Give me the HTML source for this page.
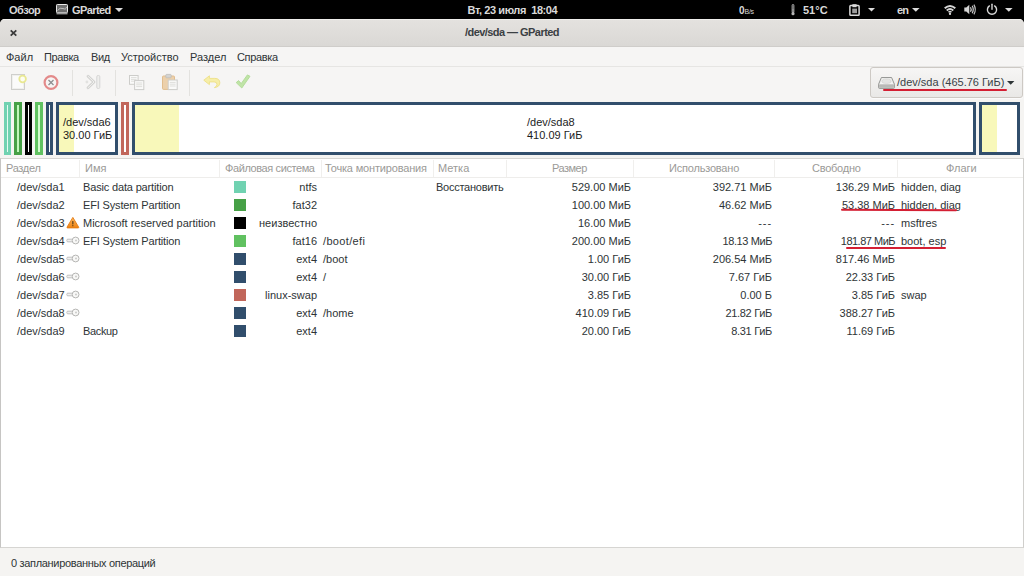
<!DOCTYPE html>
<html lang="ru">
<head>
<meta charset="utf-8">
<title>/dev/sda — GParted</title>
<style>
html,body{margin:0;padding:0;}
body{width:1024px;height:576px;overflow:hidden;position:relative;background:#000;
  font-family:"Liberation Sans","DejaVu Sans",sans-serif;font-size:11px;color:#2e3436;}
.abs{position:absolute;white-space:nowrap;}
svg{position:absolute;overflow:visible;}
/* ---------- GNOME top bar ---------- */
#topbar{position:absolute;left:0;top:0;width:1024px;height:20px;background:#000;color:#d9d9d9;font-weight:bold;font-size:11px;}
#topbar .t{position:absolute;top:1px;height:19px;line-height:19px;white-space:nowrap;}
/* ---------- window ---------- */
#win{position:absolute;left:0;top:19px;width:1024px;height:557px;background:#f5f4f2;border-radius:5px 5px 0 0;overflow:hidden;}
#titlebar{position:absolute;left:0;top:0;width:1024px;height:27px;background:linear-gradient(#e4e2df,#dad8d5);border-bottom:1px solid #cfcdca;box-shadow:inset 0 1px 0 #efeeec;}
#title{position:absolute;left:0;width:1024px;top:0;height:27px;line-height:27px;text-align:center;font-weight:bold;font-size:11px;letter-spacing:-0.55px;color:#3b4043;}
#menubar{position:absolute;left:0;top:28px;width:1024px;height:19px;background:#f6f5f4;border-bottom:1px solid #e6e5e3;}
#menubar span{position:absolute;top:0;height:20px;line-height:20px;font-size:11px;color:#2e3436;}
#toolbar{position:absolute;left:0;top:48px;width:1024px;height:33px;background:#f6f5f4;}
.sep{position:absolute;top:70px;width:1px;height:26px;background:#e3e2df;}
/* device combo */
#combo{position:absolute;left:870px;top:67px;width:151px;height:29px;border:1px solid #cdc9c4;border-radius:3px;background:linear-gradient(#f7f6f5,#e9e8e6);box-shadow:0 1px 0 rgba(255,255,255,.6);}
#combotxt{position:absolute;left:897px;top:75px;height:15px;line-height:15px;font-size:11px;color:#3a4347;white-space:nowrap;}
/* ---------- partition visual bar ---------- */
.p{position:absolute;top:102px;height:47px;border:3px solid #314e6c;background:#fff;box-sizing:content-box;}
.p .u{position:absolute;left:0;top:0;height:100%;background:#f8f8ba;}
.p .l{position:absolute;white-space:nowrap;font-size:11px;line-height:14px;color:#1c1c1c;}
/* ---------- tree ---------- */
#tree{position:absolute;left:0px;top:158px;width:1024px;height:390px;background:#fff;border:1px solid #d6d5d2;border-left-color:#c6c5c3;border-right-color:#d0cfcc;box-sizing:border-box;}
#hdr{position:absolute;left:1px;top:159px;width:1022px;height:18px;background:#fff;border-bottom:1px solid #eeedeb;}
.h{position:absolute;top:160px;height:17px;line-height:17px;font-size:11px;color:#9b9a97;white-space:nowrap;}
.hs{position:absolute;top:160px;width:1px;height:17px;background:#f0efed;}
.row{position:absolute;left:0;width:1024px;height:18px;}
.row .c{position:absolute;top:0;height:18px;line-height:18px;white-space:nowrap;font-size:11px;color:#2e3436;}
.row .sq{position:absolute;left:234px;top:3px;width:12px;height:12px;}
.ic{position:absolute;}
#status{position:absolute;left:11px;top:555px;height:16px;line-height:16px;font-size:11px;letter-spacing:-0.32px;color:#2e3436;white-space:nowrap;}
.ul{position:absolute;height:1.8px;background:#d41f33;border-radius:1px;}
</style>
</head>
<body>
<div id="topbar">
  <span class="t" style="left:9px;letter-spacing:-0.5px">Обзор</span>
  <span class="t" style="left:72px;letter-spacing:-0.6px">GParted</span>
  <span class="t" style="left:467.5px;letter-spacing:-0.42px">Вт, 23 июля&nbsp; 18:04</span>
  <span class="t" style="left:739px;font-size:10px;font-weight:bold;color:#d9d9d9">0<span style="font-size:7px;letter-spacing:-0.3px;font-weight:normal">B/s</span></span>
  <span class="t" style="left:803px">51°C</span>
  <span class="t" style="left:897px;letter-spacing:-0.8px">en</span>
</div>
<div id="win">
  <div id="titlebar">
    <div id="title">/dev/sda — GParted</div>
  </div>
  <div id="menubar">
    <span style="left:6px">Файл</span>
    <span style="left:44px;letter-spacing:-0.4px">Правка</span>
    <span style="left:91px;letter-spacing:-0.4px">Вид</span>
    <span style="left:121px">Устройство</span>
    <span style="left:190px">Раздел</span>
    <span style="left:237px;letter-spacing:-0.35px">Справка</span>
  </div>
  <div id="toolbar"></div>
</div>

<!-- toolbar separators -->
<div class="sep" style="left:72px"></div>
<div class="sep" style="left:115px"></div>
<div class="sep" style="left:189px"></div>


<div id="combo"></div>
<!-- ===== top bar icons ===== -->
<!-- app icon (hdd) -->
<svg style="left:56px;top:4px" width="12" height="11" viewBox="0 0 12 11">
  <rect x="0.5" y="0.5" width="11" height="8.2" rx="0.8" fill="#6e6e6e" stroke="#e8e8e8" stroke-width="1"/>
  <path d="M1.5 6.5 Q4 3 7 4.5 T10.5 3" fill="none" stroke="#bdbdbd" stroke-width="1"/>
  <rect x="0.5" y="8.6" width="11" height="1.8" fill="#9a9a9a"/>
</svg>
<svg style="left:115px;top:8px" width="8" height="4" viewBox="0 0 8 4"><path d="M0 0 H8 L4 4 Z" fill="#dcdcdc"/></svg>
<!-- thermometer -->
<svg style="left:790px;top:4px" width="6" height="12" viewBox="0 0 6 12">
  <rect x="2" y="0.4" width="2" height="8.4" rx="1" fill="#5a5a5a" stroke="#b5b5b5" stroke-width="0.7"/>
  <circle cx="3" cy="9.7" r="1.6" fill="#b5b5b5"/>
  <rect x="2.65" y="5" width="0.7" height="4" fill="#b5b5b5"/>
</svg>
<!-- clipboard -->
<svg style="left:849px;top:4px" width="11" height="12" viewBox="0 0 11 12">
  <rect x="0.9" y="1.6" width="9.2" height="9.6" rx="0.8" fill="none" stroke="#d9d9d9" stroke-width="1.5"/>
  <rect x="3.4" y="0.2" width="4.2" height="3" fill="#d9d9d9"/>
  <rect x="3.2" y="4.6" width="4.8" height="4.6" fill="#9c9c9c"/>
</svg>
<svg style="left:868px;top:8px" width="7" height="4" viewBox="0 0 7 4"><path d="M0 0 H7 L3.5 3.6 Z" fill="#dcdcdc"/></svg>
<svg style="left:912px;top:8px" width="8" height="4" viewBox="0 0 8 4"><path d="M0 0 H7.6 L3.8 3.8 Z" fill="#dcdcdc"/></svg>
<!-- wifi -->
<svg style="left:944px;top:5px" width="12" height="10" viewBox="0 0 12 10">
  <path d="M0.7 3.3 Q6 -1.5 11.3 3.3" fill="none" stroke="#d6d6d6" stroke-width="1.9"/>
  <path d="M2.7 5.5 Q6 2.5 9.3 5.5" fill="none" stroke="#d6d6d6" stroke-width="1.7"/>
  <path d="M4.5 7.3 Q6 6 7.5 7.3" fill="none" stroke="#d6d6d6" stroke-width="1.5"/>
  <circle cx="6" cy="8.9" r="1.15" fill="#d6d6d6"/>
</svg>
<!-- volume -->
<svg style="left:964px;top:4px" width="12" height="11" viewBox="0 0 12 11">
  <path d="M0.3 3.6 H2.3 L5.3 0.7 V10.3 L2.3 7.4 H0.3 Z" fill="#d6d6d6"/>
  <path d="M6.5 3.2 Q7.9 5.5 6.5 7.8" fill="none" stroke="#d6d6d6" stroke-width="1.2"/>
  <path d="M8.2 1.8 Q10.3 5.5 8.2 9.2" fill="none" stroke="#cfcfcf" stroke-width="1.2"/>
  <path d="M9.9 0.6 Q12.7 5.5 9.9 10.4" fill="none" stroke="#c2c2c2" stroke-width="1.2"/>
</svg>
<!-- power -->
<svg style="left:986px;top:4px" width="12" height="11" viewBox="0 0 12 11">
  <path d="M3.4 1.9 A4.6 4.6 0 1 0 8.6 1.9" fill="none" stroke="#d8d8d8" stroke-width="1.4" stroke-linecap="round"/>
  <path d="M6 0.3 V5.2" stroke="#d8d8d8" stroke-width="1.4" stroke-linecap="round"/>
</svg>
<svg style="left:1005px;top:8px" width="8" height="4" viewBox="0 0 8 4"><path d="M0 0 H7.6 L3.8 3.8 Z" fill="#dcdcdc"/></svg>

<!-- close button -->
<svg style="left:10px;top:30px" width="7" height="6" viewBox="0 0 7 6"><path d="M0.7 0.3 L6.3 5.7 M6.3 0.3 L0.7 5.7" stroke="#3a3a3a" stroke-width="1.75"/></svg>

<!-- ===== toolbar icons (insensitive / faded) ===== -->
<!-- new -->
<svg style="left:11px;top:74px" width="17" height="16" viewBox="0 0 17 16">
  <rect x="0.5" y="0.5" width="13" height="15" fill="#fbfbfa" stroke="#cfcfcc" stroke-width="1"/>
  <rect x="1.5" y="1.5" width="11" height="13" fill="none" stroke="#f0f0ee" stroke-width="1"/>
  <circle cx="11.6" cy="5" r="3.3" fill="#fdfdf0" stroke="#e9e892" stroke-width="1.8"/>
</svg>
<!-- delete -->
<svg style="left:43px;top:74px" width="16" height="17" viewBox="0 0 16 17">
  <circle cx="8" cy="8.5" r="6.4" fill="#f7f5f4" stroke="#e38a8a" stroke-width="2.2"/>
  <path d="M5.5 6 L10.5 11 M10.5 6 L5.5 11" stroke="#8e8e90" stroke-width="1.3"/>
</svg>
<!-- resize/move -->
<svg style="left:85px;top:75px" width="16" height="14" viewBox="0 0 16 14">
  <path d="M3 1.2 L9 7 L3 12.8" fill="none" stroke="#d3d3d1" stroke-width="2.8" stroke-linejoin="round" stroke-linecap="round"/>
  <path d="M3 1.2 L9 7 L3 12.8" fill="none" stroke="#f1f1ef" stroke-width="1" stroke-linejoin="round" stroke-linecap="round"/>
  <circle cx="1.9" cy="7" r="1.4" fill="#e2e2e0"/>
  <rect x="11.8" y="0.5" width="3" height="13" rx="1.2" fill="#efefed" stroke="#d3d3d1" stroke-width="0.9"/>
</svg>
<!-- copy -->
<svg style="left:129px;top:75px" width="16" height="15" viewBox="0 0 16 15">
  <rect x="0.5" y="0.5" width="8.6" height="8.8" fill="#fafaf9" stroke="#cdcdca" stroke-width="1"/>
  <path d="M2 2.6 H7.6 M2 4.4 H7.6 M2 6.2 H7.6" stroke="#dededb" stroke-width="1"/>
  <rect x="5.6" y="5.6" width="9.2" height="9" fill="#fafaf9" stroke="#cdcdca" stroke-width="1"/>
  <path d="M7.2 8 H13.2 M7.2 9.8 H13.2 M7.2 11.6 H13.2" stroke="#dededb" stroke-width="1"/>
</svg>
<!-- paste -->
<svg style="left:162px;top:74px" width="16" height="16" viewBox="0 0 16 16">
  <rect x="0.5" y="2" width="12" height="13.4" rx="1" fill="#ecd0ab" stroke="#e1bd8e" stroke-width="1"/>
  <rect x="3.8" y="0.4" width="5.4" height="3.4" rx="0.8" fill="#d4d4d2" stroke="#bdbdba" stroke-width="0.8"/>
  <rect x="6.2" y="6" width="9" height="9.6" fill="#fafaf9" stroke="#cdcdca" stroke-width="1"/>
  <path d="M7.8 8.4 H13.6 M7.8 10.2 H13.6 M7.8 12 H13.6" stroke="#dededb" stroke-width="1"/>
</svg>
<!-- undo -->
<svg style="left:203px;top:75px" width="18" height="14" viewBox="0 0 18 14">
  <path d="M6.4 0.8 L0.8 5.2 L6.4 9.6 V6.9 H11.2 Q14 6.9 14 9.4 Q14 11.6 11.4 12.6 Q16.8 12 16.8 7.8 Q16.8 3.4 11.8 3.4 H6.4 Z" fill="#f6eea8" stroke="#efe28c" stroke-width="1" stroke-linejoin="round"/>
</svg>
<!-- apply -->
<svg style="left:235px;top:74px" width="16" height="15" viewBox="0 0 16 15">
  <path d="M1.2 8.6 L3.6 6.6 L6.2 9.6 L12.4 0.9 L15 2.3 L6.8 14 Z" fill="#c0e4a7" stroke="#b0da95" stroke-width="0.9" stroke-linejoin="round"/>
</svg>

<!-- combo hdd icon + arrow -->
<svg style="left:878px;top:77px" width="17" height="12" viewBox="0 0 17 12">
  <path d="M3.4 0.5 H13.6 L16.4 7.2 V10.6 Q16.4 11.4 15.6 11.4 H1.4 Q0.6 11.4 0.6 10.6 V7.2 Z" fill="#dadad8" stroke="#8f908d" stroke-width="0.9" stroke-linejoin="round"/>
  <path d="M3.9 1.3 H13.1 L15.4 6.9 H1.6 Z" fill="#f3f3f2"/>
  <ellipse cx="8.5" cy="4.2" rx="4.6" ry="2.2" fill="#e4e4e2" stroke="#cfcfcd" stroke-width="0.6"/>
  <rect x="1.2" y="7.6" width="14.6" height="3.2" rx="0.6" fill="#b9bab7"/>
</svg>
<svg style="left:1007px;top:81px" width="8" height="4" viewBox="0 0 8 4"><path d="M0 0 H7.4 L3.7 3.8 Z" fill="#2e3436"/></svg>

<!-- device combo -->
<span id="combotxt">/dev/sda (465.76 ГиБ)</span>
<div class="ul" style="left:883px;top:89px;width:124px"></div>

<!-- partition bars -->
<div class="p" style="left:4px;width:1px;border-color:#70d2b1;background:#e6fbf2"></div>
<div class="p" style="left:14px;width:2px;border-color:#46a046;background:#c0f6ba"></div>
<div class="p" style="left:25px;width:1px;border-color:#000"></div>
<div class="p" style="left:35px;width:2px;border-color:#60c160;background:#d3fbce"></div>
<div class="p" style="left:46px;width:1px;border-color:#314e6c"></div>
<div class="p" style="left:56px;width:56px"><div class="u" style="width:15px"></div>
  <span class="l" style="left:4px;top:10px">/dev/sda6</span><span class="l" style="left:4px;top:23px">30.00 ГиБ</span></div>
<div class="p" style="left:121px;width:2px;border-color:#c1665a"></div>
<div class="p" style="left:132px;width:838px"><div class="u" style="width:44px"></div>
  <span class="l" style="left:392px;top:10px">/dev/sda8</span><span class="l" style="left:392px;top:23px">410.09 ГиБ</span></div>
<div class="p" style="left:979px;width:35px"><div class="u" style="width:15px"></div></div>

<!-- tree -->
<div id="tree"></div>
<div id="hdr"></div>
<span class="h" style="left:6px;letter-spacing:-0.3px">Раздел</span>
<span class="h" style="left:85px">Имя</span>
<span class="h" style="left:225px;letter-spacing:-0.4px">Файловая система</span>
<span class="h" style="left:325px;letter-spacing:-0.17px">Точка монтирования</span>
<span class="h" style="left:438px">Метка</span>
<span class="h" style="left:552px;letter-spacing:-0.5px">Размер</span>
<span class="h" style="left:669px;letter-spacing:-0.2px">Использовано</span>
<span class="h" style="left:812px;letter-spacing:-0.25px">Свободно</span>
<span class="h" style="left:946px">Флаги</span>
<div class="hs" style="left:79px"></div>
<div class="hs" style="left:219px"></div>
<div class="hs" style="left:321px"></div>
<div class="hs" style="left:433px"></div>
<div class="hs" style="left:506px"></div>
<div class="hs" style="left:633px"></div>
<div class="hs" style="left:774px"></div>
<div class="hs" style="left:897px"></div>

<div class="row" style="top:178px">
<span class="c" style="left:17px">/dev/sda1</span>
<span class="c" style="left:83px;letter-spacing:-0.16px">Basic data partition</span>
<span class="sq" style="background:#70d2b1"></span>
<span class="c r" style="right:707px">ntfs</span>
<span class="c" style="left:436px;letter-spacing:-0.25px">Восстановить</span>
<span class="c r" style="right:393px">529.00 МиБ</span>
<span class="c r" style="right:252px">392.71 МиБ</span>
<span class="c r" style="right:129px">136.29 МиБ</span>
<span class="c" style="left:901px">hidden, diag</span>
</div>
<div class="row" style="top:196px">
<span class="c" style="left:17px">/dev/sda2</span>
<span class="c" style="left:83px;letter-spacing:-0.15px">EFI System Partition</span>
<span class="sq" style="background:#46a046"></span>
<span class="c r" style="right:707px">fat32</span>
<span class="c r" style="right:393px">100.00 МиБ</span>
<span class="c r" style="right:252px">46.62 МиБ</span>
<span class="c r" style="right:129px">53.38 МиБ</span>
<span class="c" style="left:901px">hidden, diag</span>
</div>
<div class="row" style="top:214px">
<span class="c" style="left:17px">/dev/sda3</span>
<span class="c" style="left:83px">Microsoft reserved partition</span>
<span class="sq" style="background:#000000"></span>
<span class="c r" style="right:707px">неизвестно</span>
<span class="c r" style="right:393px">16.00 МиБ</span>
<span class="c r" style="right:252px;letter-spacing:0.9px">---</span>
<span class="c r" style="right:129px;letter-spacing:0.9px">---</span>
<span class="c" style="left:901px">msftres</span>
</div>
<svg class="ic" style="left:66px;top:217px" width="14" height="12" viewBox="0 0 14 12"><defs><linearGradient id="wg" x1="0" y1="0" x2="0" y2="1"><stop offset="0" stop-color="#fbb860"/><stop offset="1" stop-color="#ef8210"/></linearGradient></defs><path d="M6.85 0.4 L12.7 10.2 Q12.95 10.9 12.2 10.9 L1.5 10.9 Q0.75 10.9 1 10.2 Z" fill="url(#wg)" stroke="#e47c12" stroke-width="0.9" stroke-linejoin="round"/><rect x="6.3" y="3.9" width="1.1" height="3.5" rx="0.4" fill="#4a3418"/><rect x="6.3" y="8.1" width="1.1" height="1.2" rx="0.4" fill="#4a3418"/></svg>
<div class="row" style="top:232px">
<span class="c" style="left:17px">/dev/sda4</span>
<span class="c" style="left:83px;letter-spacing:-0.15px">EFI System Partition</span>
<span class="sq" style="background:#60c160"></span>
<span class="c r" style="right:707px">fat16</span>
<span class="c" style="left:323px;letter-spacing:0.35px">/boot/efi</span>
<span class="c r" style="right:393px">200.00 МиБ</span>
<span class="c r" style="right:252px;letter-spacing:-0.4px">18.13 МиБ</span>
<span class="c r" style="right:129px;letter-spacing:-0.5px">181.87 МиБ</span>
<span class="c" style="left:901px">boot, esp</span>
</div>
<svg class="ic" style="left:66px;top:236px" width="14" height="9" viewBox="0 0 14 9"><rect x="0.8" y="3.2" width="6.4" height="2.6" rx="1.1" fill="#f1f1f0" stroke="#bababa" stroke-width="0.9"/><circle cx="9.6" cy="4.5" r="3.4" fill="#f8f8f7" stroke="#b6b6b4" stroke-width="1"/><circle cx="10" cy="4.5" r="0.9" fill="#c6c6c4"/></svg>
<div class="row" style="top:250px">
<span class="c" style="left:17px">/dev/sda5</span>
<span class="sq" style="background:#314e6c"></span>
<span class="c r" style="right:707px">ext4</span>
<span class="c" style="left:323px">/boot</span>
<span class="c r" style="right:393px">1.00 ГиБ</span>
<span class="c r" style="right:252px">206.54 МиБ</span>
<span class="c r" style="right:129px">817.46 МиБ</span>
</div>
<svg class="ic" style="left:66px;top:254px" width="14" height="9" viewBox="0 0 14 9"><rect x="0.8" y="3.2" width="6.4" height="2.6" rx="1.1" fill="#f1f1f0" stroke="#bababa" stroke-width="0.9"/><circle cx="9.6" cy="4.5" r="3.4" fill="#f8f8f7" stroke="#b6b6b4" stroke-width="1"/><circle cx="10" cy="4.5" r="0.9" fill="#c6c6c4"/></svg>
<div class="row" style="top:268px">
<span class="c" style="left:17px">/dev/sda6</span>
<span class="sq" style="background:#314e6c"></span>
<span class="c r" style="right:707px">ext4</span>
<span class="c" style="left:323px">/</span>
<span class="c r" style="right:393px">30.00 ГиБ</span>
<span class="c r" style="right:252px">7.67 ГиБ</span>
<span class="c r" style="right:129px">22.33 ГиБ</span>
</div>
<svg class="ic" style="left:66px;top:272px" width="14" height="9" viewBox="0 0 14 9"><rect x="0.8" y="3.2" width="6.4" height="2.6" rx="1.1" fill="#f1f1f0" stroke="#bababa" stroke-width="0.9"/><circle cx="9.6" cy="4.5" r="3.4" fill="#f8f8f7" stroke="#b6b6b4" stroke-width="1"/><circle cx="10" cy="4.5" r="0.9" fill="#c6c6c4"/></svg>
<div class="row" style="top:286px">
<span class="c" style="left:17px">/dev/sda7</span>
<span class="sq" style="background:#c1665a"></span>
<span class="c r" style="right:707px">linux-swap</span>
<span class="c r" style="right:393px">3.85 ГиБ</span>
<span class="c r" style="right:252px">0.00 Б</span>
<span class="c r" style="right:129px">3.85 ГиБ</span>
<span class="c" style="left:901px">swap</span>
</div>
<svg class="ic" style="left:66px;top:290px" width="14" height="9" viewBox="0 0 14 9"><rect x="0.8" y="3.2" width="6.4" height="2.6" rx="1.1" fill="#f1f1f0" stroke="#bababa" stroke-width="0.9"/><circle cx="9.6" cy="4.5" r="3.4" fill="#f8f8f7" stroke="#b6b6b4" stroke-width="1"/><circle cx="10" cy="4.5" r="0.9" fill="#c6c6c4"/></svg>
<div class="row" style="top:304px">
<span class="c" style="left:17px">/dev/sda8</span>
<span class="sq" style="background:#314e6c"></span>
<span class="c r" style="right:707px">ext4</span>
<span class="c" style="left:323px">/home</span>
<span class="c r" style="right:393px">410.09 ГиБ</span>
<span class="c r" style="right:252px;letter-spacing:-0.3px">21.82 ГиБ</span>
<span class="c r" style="right:129px">388.27 ГиБ</span>
</div>
<svg class="ic" style="left:66px;top:308px" width="14" height="9" viewBox="0 0 14 9"><rect x="0.8" y="3.2" width="6.4" height="2.6" rx="1.1" fill="#f1f1f0" stroke="#bababa" stroke-width="0.9"/><circle cx="9.6" cy="4.5" r="3.4" fill="#f8f8f7" stroke="#b6b6b4" stroke-width="1"/><circle cx="10" cy="4.5" r="0.9" fill="#c6c6c4"/></svg>
<div class="row" style="top:322px">
<span class="c" style="left:17px">/dev/sda9</span>
<span class="c" style="left:83px;letter-spacing:-0.35px">Backup</span>
<span class="sq" style="background:#314e6c"></span>
<span class="c r" style="right:707px">ext4</span>
<span class="c r" style="right:393px">20.00 ГиБ</span>
<span class="c r" style="right:252px;letter-spacing:-0.3px">8.31 ГиБ</span>
<span class="c r" style="right:129px">11.69 ГиБ</span>
</div>

<!-- red annotation underlines -->
<div class="ul" style="left:841px;top:209.3px;width:116px;transform:rotate(0.25deg)"></div>
<div class="ul" style="left:846px;top:246.8px;width:99.5px"></div>

<span id="status">0 запланированных операций</span>
</body>
</html>
